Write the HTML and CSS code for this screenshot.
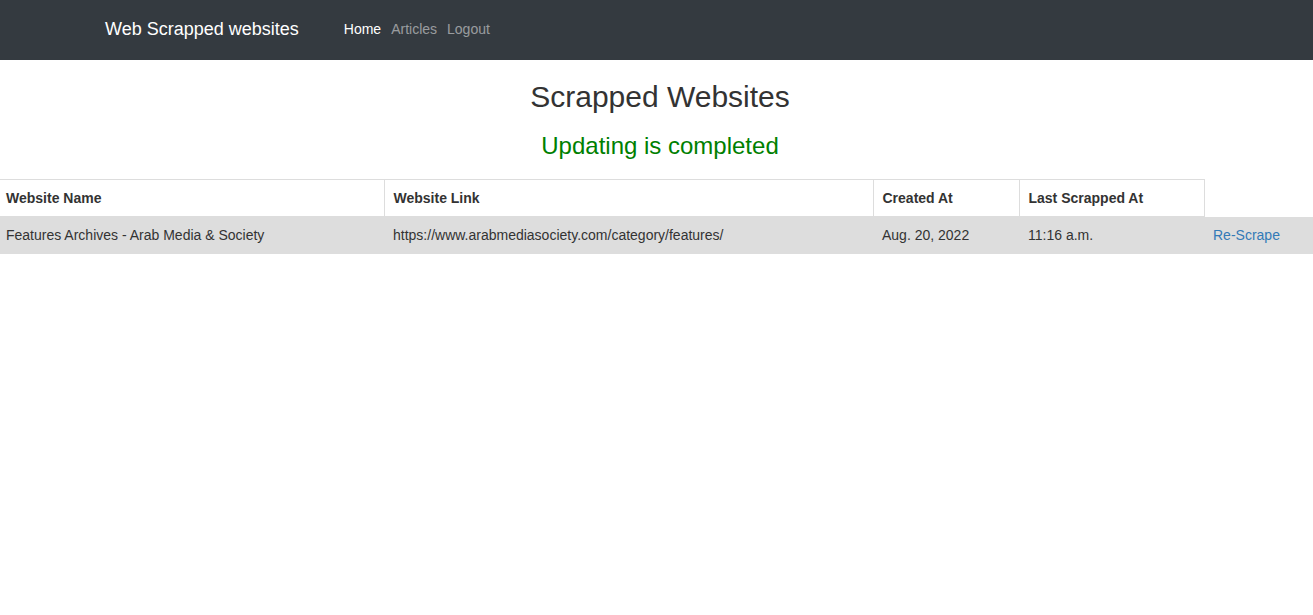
FILE: index.html
```html
<!DOCTYPE html>
<html>
<head>
<meta charset="utf-8">
<title>Scrapped Websites</title>
<link rel="stylesheet" href="styles.css">
</head>
<body>
<nav class="navbar">
  <a class="brand" href="#">Web Scrapped websites</a>
  <ul class="nav-links">
    <li><a class="active" href="#">Home</a></li>
    <li><a href="#">Articles</a></li>
    <li><a href="#">Logout</a></li>
  </ul>
</nav>
<main>
  <header class="heading">
    <h1 class="title">Scrapped Websites</h1>
    <h2 class="status">Updating is completed</h2>
  </header>
  <table class="sites">
    <thead>
      <tr>
        <th class="c-name">Website Name</th>
        <th class="c-link">Website Link</th>
        <th class="c-created">Created At</th>
        <th class="c-last">Last Scrapped At</th>
        <th class="c-action"></th>
      </tr>
    </thead>
    <tbody>
      <tr>
        <td class="c-name">Features Archives - Arab Media &amp; Society</td>
        <td>https://www.arabmediasociety.com/category/features/</td>
        <td>Aug. 20, 2022</td>
        <td>11:16 a.m.</td>
        <td><a class="rescrape" href="#">Re-Scrape</a></td>
      </tr>
    </tbody>
  </table>
</main>
</body>
</html>
```
FILE: styles.css
```css
* { box-sizing: border-box; }
body {
  margin: 0;
  font-family: "Liberation Sans", Arial, Helvetica, sans-serif;
  font-size: 14px;
  color: #333;
  background: #fff;
}
.navbar {
  height: 60px;
  background: #343a40;
  display: flex;
  align-items: center;
  padding-left: 105px;
  padding-bottom: 2px;
}
.brand {
  color: #fff;
  font-size: 18px;
  text-decoration: none;
  margin-right: 40px;
}
.nav-links {
  list-style: none;
  display: flex;
  margin: 0;
  padding: 0;
}
.nav-links a {
  display: block;
  padding: 0 5px;
  color: rgba(255,255,255,0.5);
  text-decoration: none;
  font-size: 14px;
}
.nav-links a.active { color: #fff; }
main { padding-top: 20px; }
.heading { padding-left: 7px; }
.title {
  margin: 0;
  text-align: center;
  font-size: 30px;
  font-weight: 400;
  line-height: 34px;
  color: #333;
}
.status {
  margin: 18px 0 0;
  text-align: center;
  font-size: 24px;
  font-weight: 400;
  line-height: 28px;
  color: #008000;
}
.sites {
  margin-top: 19px;
  width: 100%;
  border-collapse: collapse;
}
.sites th, .sites td {
  text-align: left;
  padding: 0 8px 0 9px;
  height: 37px;
  vertical-align: middle;
}
.sites th {
  font-weight: bold;
  border: 1px solid #ddd;
}
.sites th.c-action { border: none; }
.sites th.c-name { border-left: none; }
.sites .c-name { padding-left: 6px; width: 384px; }
.sites .c-link { width: 489px; }
.sites .c-created { width: 146px; }
.sites .c-last { width: 185px; }
.sites tbody tr { background: #ddd; }
.rescrape { color: #337ab7; text-decoration: none; }
```
